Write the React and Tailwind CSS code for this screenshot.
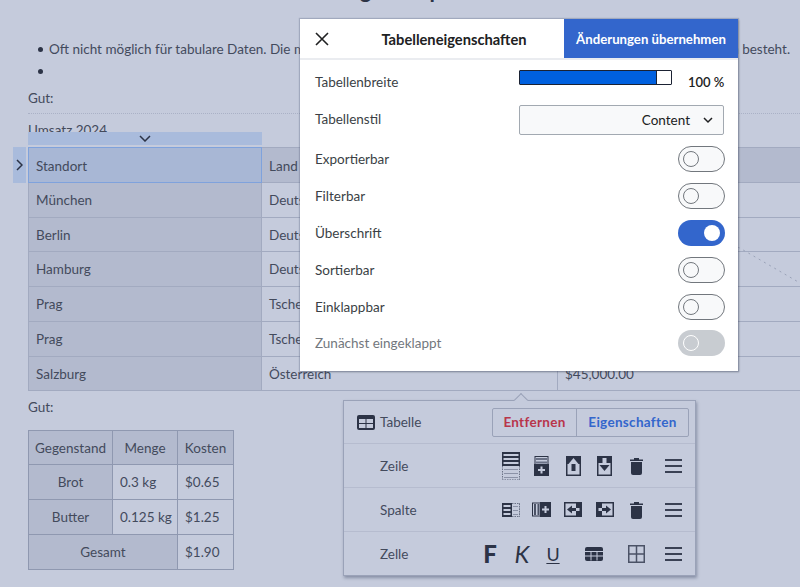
import React from "react";

const D = "#2c3346";
const L = "#c5cbdc";

const Svg = ({ w, h, children }) => (
  <svg width={w} height={h} viewBox={`0 0 ${w} ${h}`} className="block">
    {children}
  </svg>
);

const Bars = ({ x, y, w, n, gap, h = 2, fill = L }) =>
  Array.from({ length: n }).map((_, i) => (
    <rect key={i} x={x} y={y + i * gap} width={w} height={h} fill={fill} />
  ));

const IconRowSel = () => (
  <Svg w={18} h={28}>
    <rect x="0" y="0" width="18" height="14" fill={D} />
    <Bars x={1.5} y={2} w={15} n={3} gap={4} />
    <path d="M.5 14v14M17.5 14v14" stroke="#6b7287" strokeDasharray="1.5 1" fill="none" />
    <Bars x={2} y={17} w={14} n={3} gap={4} h={1} fill="#8b92a7" />
    <path d="M0 27.5h18" stroke="#8b92a7" strokeDasharray="1.5 1" />
  </Svg>
);
const IconAddRow = () => (
  <Svg w={15} h={20}>
    <rect x="1" y="0.5" width="13" height="8" fill="none" stroke={D} />
    <rect x="2" y="2" width="11" height="2" fill="#6b7287" />
    <rect x="2" y="5.5" width="11" height="2" fill="#6b7287" />
    <rect x="0" y="8" width="15" height="12" fill={D} />
    <path d="M7.5 10.5v7M4 14h7" stroke={L} strokeWidth="2" />
  </Svg>
);
const IconUp = () => (
  <Svg w={15} h={20}>
    <rect x="0" y="0" width="15" height="20" fill={D} />
    <rect x="1.5" y="8" width="12" height="10.5" fill={L} />
    <path d="M7.5 2L12.5 8H2.5z" fill={L} />
    <rect x="5.5" y="8" width="4" height="7" fill={D} />
  </Svg>
);
const IconDown = () => (
  <Svg w={15} h={20}>
    <rect x="0" y="0" width="15" height="20" fill={D} />
    <rect x="1.5" y="7" width="12" height="11.5" fill={L} />
    <rect x="5.5" y="2" width="4" height="6" fill={L} />
    <path d="M7.5 15L2.5 9h10z" fill={D} />
  </Svg>
);
const IconLeft = () => (
  <Svg w={18} h={15}>
    <rect x="0" y="0" width="18" height="15" fill={D} />
    <rect x="1.5" y="1.5" width="10.5" height="12" fill={L} />
    <path d="M3 7.5L8 3.5v8z" fill={D} />
    <rect x="8" y="6" width="4" height="3" fill={D} />
    <rect x="12" y="6" width="3.5" height="3" fill={L} />
  </Svg>
);
const IconRight = () => (
  <Svg w={18} h={15}>
    <rect x="0" y="0" width="18" height="15" fill={D} />
    <rect x="6" y="1.5" width="10.5" height="12" fill={L} />
    <path d="M15 7.5L10 3.5v8z" fill={D} />
    <rect x="6" y="6" width="4" height="3" fill={D} />
    <rect x="2.5" y="6" width="3.5" height="3" fill={L} />
  </Svg>
);
const IconColSel = () => (
  <Svg w={18} h={14}>
    <rect x="0" y="0" width="10" height="14" fill={D} />
    <Bars x={1.5} y={2} w={7} n={3} gap={4} />
    <path d="M10 .5h8v13h-8M17.5 .5v13" fill="none" stroke="#6b7287" strokeDasharray="1.5 1" />
    <Bars x={11} y={3} w={5} n={3} gap={4} h={1} fill="#8b92a7" />
  </Svg>
);
const IconAddCol = () => (
  <Svg w={19} h={15}>
    <rect x="0.5" y="1" width="9" height="13" fill="none" stroke={D} />
    <rect x="2" y="2" width="2" height="11" fill="#4b5266" />
    <rect x="5.5" y="2" width="2" height="11" fill="#4b5266" />
    <rect x="8" y="0" width="11" height="15" fill={D} />
    <path d="M13.5 4v7M10 7.5h7" stroke={L} strokeWidth="2" />
  </Svg>
);
const IconTrash = () => (
  <Svg w={13} h={18}>
    <path d="M0 2.5h13V4H0zM4 1h5v1.5H4z" fill={D} />
    <path d="M1 5h11v11a2 2 0 0 1-2 2H3a2 2 0 0 1-2-2z" fill={D} />
  </Svg>
);
const IconMenu = () => (
  <Svg w={17} h={14}>
    <path d="M0 1h17M0 7h17M0 13h17" stroke="#3a4154" strokeWidth="2" />
  </Svg>
);
const IconMerge = () => (
  <Svg w={18} h={14}>
    <rect x="0" y="0" width="18" height="14" rx="2" fill={D} />
    <path d="M0 4.5h18M0 9h18M6 4.5v9M12 4.5v9" stroke={L} strokeWidth="1" />
  </Svg>
);
const IconBorders = () => (
  <Svg w={17} h={18}>
    <path d="M.75.75h15.5v16.5H.75zM8.5.75v16.5M.75 9h15.5" fill="none" stroke="#4b5266" strokeWidth="1.5" />
  </Svg>
);
const IconTable = () => (
  <Svg w={18} h={15}>
    <rect x="0" y="0" width="18" height="15" rx="2" fill={D} />
    <rect x="2" y="4" width="6.5" height="4" fill={L} />
    <rect x="9.5" y="4" width="6.5" height="4" fill={L} />
    <rect x="2" y="9" width="6.5" height="4" fill={L} />
    <rect x="9.5" y="9" width="6.5" height="4" fill={L} />
  </Svg>
);

const Toggle = ({ on, disabled }) => {
  if (on)
    return (
      <div className="-mr-px flex h-[26px] w-[47px] items-center justify-end rounded-full bg-[#3366cc] pr-[5px]">
        <div className="h-[16px] w-[16px] rounded-full bg-white" />
      </div>
    );
  if (disabled)
    return (
      <div className="-mr-px flex h-[26px] w-[47px] items-center rounded-full bg-[#c8ccd1] pl-[5px]">
        <div className="h-[16px] w-[16px] rounded-full border border-white bg-[#c8ccd1]" />
      </div>
    );
  return (
    <div className="-mr-px flex h-[26px] w-[47px] items-center rounded-full border border-[#72777d] bg-[#f8f9fa] pl-[4px]">
      <div className="h-[16px] w-[16px] rounded-full border border-[#72777d] bg-[#f8f9fa]" />
    </div>
  );
};

const rows = [
  ["Exportierbar"],
  ["Filterbar"],
  ["Überschrift", true],
  ["Sortierbar"],
  ["Einklappbar"],
];

const cityRows = [
  ["München", "Deutschland", "$120,000.00", 35],
  ["Berlin", "Deutschland", "$95,000.00", 34],
  ["Hamburg", "Deutschland", "$80,000.00", 35],
  ["Prag", "Tschechien", "$60,000.00", 35],
  ["Prag", "Tschechien", "$55,000.00", 35],
  ["Salzburg", "Österreich", "$45,000.00", 34],
];

const ActionRow = ({ label, children }) => (
  <div className="flex h-[44px] items-center border-t border-[#b6bccf] pl-[36px] pr-px">
    <span className="text-[#434a5c]">{label}</span>
    <div className="ml-auto flex items-center">{children}</div>
  </div>
);

const Slot = ({ w, children }) => (
  <div className="flex items-center justify-center" style={{ width: w }}>
    {children}
  </div>
);

const Bullet = ({ children }) => (
  <li className="flex items-center">
    <span className="mr-[6px] h-[5px] w-[5px] shrink-0 rounded-full bg-[#2c3346]" />
    {children}
  </li>
);

export default function App() {
  return (
    <div className="relative h-[587px] w-[800px] overflow-hidden bg-[#c5cbdc] text-[13.5px] leading-[22px] text-[#434a5c] [font-family:Lato,sans-serif]">
      <h1 className="-mt-[23px] h-[61px] text-center text-[22px] font-bold leading-[26px] text-[#2c3346]">
        Einige Beispiele
      </h1>
      <ul className="whitespace-nowrap pl-[38px]">
        <Bullet>Oft nicht möglich für tabulare Daten. Die mobile Ansicht ist unlesbar, wenn eine Tabelle aus vielen Spalten und Zeilen besteht.</Bullet>
        <Bullet>&nbsp;</Bullet>
      </ul>
      <p className="ml-[28px] mt-[5px]">Gut:</p>
      <div className="ml-[28px] mt-[4px] h-[34px] border-t border-dotted border-[#aab1c6] pt-[5px]">Umsatz 2024</div>

      <table className="ml-[28px] w-[820px] table-fixed border-collapse">
        <colgroup>
          <col className="w-[233px]" />
          <col className="w-[296px]" />
          <col />
        </colgroup>
        <thead>
          <tr className="h-[35px] bg-[#b3bace]">
            <th className="relative border border-[#a2aac0] px-[7px] pt-px text-left font-normal">
              <div className="absolute -inset-px border border-[#7fa2dc] bg-[#9db3dc]/50" />
              <span className="relative">Standort</span>
              <div className="absolute -left-px -right-px -top-[16px] flex h-[13px] items-center justify-center bg-[#a9bbdc]">
                <svg width="12" height="7" viewBox="0 0 12 7"><path d="M1 1l5 5 5-5" fill="none" stroke="#2c3346" strokeWidth="1.5" /></svg>
              </div>
              <div className="absolute -left-[16px] -top-px -bottom-px flex w-[13px] items-center justify-center bg-[#a9bbdc]">
                <svg width="7" height="12" viewBox="0 0 7 12"><path d="M1 1l5 5-5 5" fill="none" stroke="#2c3346" strokeWidth="1.5" /></svg>
              </div>
            </th>
            <th className="border border-[#a2aac0] px-[7px] pt-px text-left font-normal">Land</th>
            <th className="border border-[#a2aac0] px-[7px] pt-px text-left font-normal">Umsatz</th>
          </tr>
        </thead>
        <tbody>
          {cityRows.map(([a, b, c, h], i) => (
            <tr key={i} style={{ height: h }}>
              <td className="border border-[#a2aac0] bg-[#b3bace] px-[7px]">{a}</td>
              <td className="border border-[#a2aac0] px-[7px]">{b}</td>
              <td className="border border-[#a2aac0] px-[7px]">{c}</td>
            </tr>
          ))}
        </tbody>
      </table>

      <p className="ml-[28px] mt-[5px]">Gut:</p>

      <table className="ml-[28px] mt-[12px] w-[205px] table-fixed border-collapse">
        <colgroup>
          <col className="w-[84px]" />
          <col className="w-[65px]" />
          <col className="w-[56px]" />
        </colgroup>
        <tbody>
          <tr className="h-[34px] bg-[#b3bace] text-center">
            <td className="border border-[#8f98b0]">Gegenstand</td>
            <td className="border border-[#8f98b0]">Menge</td>
            <td className="border border-[#8f98b0]">Kosten</td>
          </tr>
          <tr className="h-[35px]">
            <td className="border border-[#8f98b0] bg-[#b3bace] text-center">Brot</td>
            <td className="border border-[#8f98b0] px-[7px]">0.3 kg</td>
            <td className="border border-[#8f98b0] px-[7px]">$0.65</td>
          </tr>
          <tr className="h-[35px]">
            <td className="border border-[#8f98b0] bg-[#b3bace] text-center">Butter</td>
            <td className="whitespace-nowrap border border-[#8f98b0] px-[7px]">0.125 kg</td>
            <td className="border border-[#8f98b0] px-[7px]">$1.25</td>
          </tr>
          <tr className="h-[35px]">
            <td colSpan={2} className="border border-[#8f98b0] bg-[#b3bace] text-center">Gesamt</td>
            <td className="border border-[#8f98b0] px-[7px]">$1.90</td>
          </tr>
        </tbody>
      </table>

      {/* diagonal dotted line in the chart cell */}
      <svg className="absolute left-[738px] top-[247px]" width="62" height="36" viewBox="0 0 62 36">
        <path d="M0 0L62 36" stroke="#9aa2b8" strokeDasharray="2 4" fill="none" />
      </svg>

      {/* properties dialog */}
      <div className="absolute left-[300px] top-[19px] w-[438px] bg-white text-[#202122] shadow-[0_0_1px_1px_rgba(90,100,130,0.3),1px_1px_2px_rgba(0,0,0,0.25)]">
        <div className="flex h-[41px] items-stretch border-b-2 border-[#eaecf0]">
          <div className="flex w-[44px] items-center justify-center">
            <svg width="14" height="14" viewBox="0 0 14 14"><path d="M1 1l12 12M13 1L1 13" stroke="#202122" strokeWidth="1.6" fill="none" /></svg>
          </div>
          <div className="flex flex-1 items-center justify-center text-[14.7px] font-bold">Tabelleneigenschaften</div>
          <div className="flex w-[174px] items-center justify-center bg-[#3366cc] text-[13.2px] font-bold text-white">Änderungen übernehmen</div>
        </div>
        <div className="pb-[10px] pl-[15px] pr-[14px] pt-[3px]">
          <div className="flex h-[37px] items-center justify-between">
            <span className="text-[#3a3f45]">Tabellenbreite</span>
            <div className="flex items-center">
              <div className="-mt-[8px] mr-[16px] flex h-[15px] w-[153px] items-stretch rounded-[1px] border border-[#1b2233] bg-white">
                <div className="w-[136px] bg-[#0060df]" />
                <div className="w-[14px] border-l border-[#1b2233] bg-white" />
              </div>
              <span className="w-[36px] whitespace-nowrap text-right text-[13px] font-semibold">100 %</span>
            </div>
          </div>
          <div className="flex h-[37px] items-center justify-between">
            <span className="text-[#3a3f45]">Tabellenstil</span>
            <div className="mt-[3px] flex h-[30px] w-[205px] items-center justify-end rounded-[2px] border border-[#a2a9b1] bg-[#f8f9fa] pr-[10px]">
              <span>Content</span>
              <svg className="ml-[13px]" width="10" height="7" viewBox="0 0 10 7"><path d="M1 1l4 4 4-4" fill="none" stroke="#202122" strokeWidth="1.5" /></svg>
            </div>
          </div>
          <div className="mt-[3px]">
            {rows.map(([label, on]) => (
              <div key={label} className="flex h-[37px] items-center justify-between">
                <span className="text-[#3a3f45]">{label}</span>
                <Toggle on={on} />
              </div>
            ))}
            <div className="-mt-px flex h-[37px] items-center justify-between">
              <span className="text-[#72777d]">Zunächst eingeklappt</span>
              <Toggle disabled />
            </div>
          </div>
        </div>
      </div>

      {/* context toolbar */}
      <div className="absolute left-[343px] top-[400px] w-[353px] border border-[#9aa2b8] bg-[#c5cbdc] shadow-[1px_2px_3px_rgba(60,70,100,0.45)]">
        <div className="absolute -top-[6px] left-[172px] h-[10px] w-[10px] rotate-45 border-l border-t border-[#9aa2b8] bg-[#c5cbdc]" />
        <div className="relative flex h-[42px] items-center pl-[13px] pr-[6px]">
          <IconTable />
          <span className="ml-[5px] text-[#434a5c]">Tabelle</span>
          <div className="ml-auto flex h-[29px] rounded-[2px] border border-[#9aa2b8] text-[13.5px] font-bold tracking-[0.3px]">
            <div className="flex w-[84px] items-center justify-center border-r border-[#9aa2b8] text-[#b8354a]">Entfernen</div>
            <div className="flex w-[111px] items-center justify-center text-[#3366cc]">Eigenschaften</div>
          </div>
        </div>
        <ActionRow label="Zeile">
          <Slot w={30}><IconRowSel /></Slot>
          <Slot w={31}><IconAddRow /></Slot>
          <Slot w={32}><IconUp /></Slot>
          <Slot w={31}><IconDown /></Slot>
          <Slot w={32}><IconTrash /></Slot>
          <Slot w={42}><IconMenu /></Slot>
        </ActionRow>
        <ActionRow label="Spalte">
          <Slot w={30}><IconColSel /></Slot>
          <Slot w={31}><IconAddCol /></Slot>
          <Slot w={32}><IconLeft /></Slot>
          <Slot w={31}><IconRight /></Slot>
          <Slot w={32}><IconTrash /></Slot>
          <Slot w={42}><IconMenu /></Slot>
        </ActionRow>
        <ActionRow label="Zelle">
          <Slot w={32}><span className="text-[24px] font-black leading-none text-[#2c3346]">F</span></Slot>
          <Slot w={32}><span className="text-[24px] italic leading-none text-[#2c3346]">K</span></Slot>
          <Slot w={30}><span className="text-[18px] leading-none text-[#2c3346] underline underline-offset-2">U</span></Slot>
          <Slot w={52}><IconMerge /></Slot>
          <Slot w={32}><IconBorders /></Slot>
          <Slot w={42}><IconMenu /></Slot>
        </ActionRow>
      </div>
    </div>
  );
}
